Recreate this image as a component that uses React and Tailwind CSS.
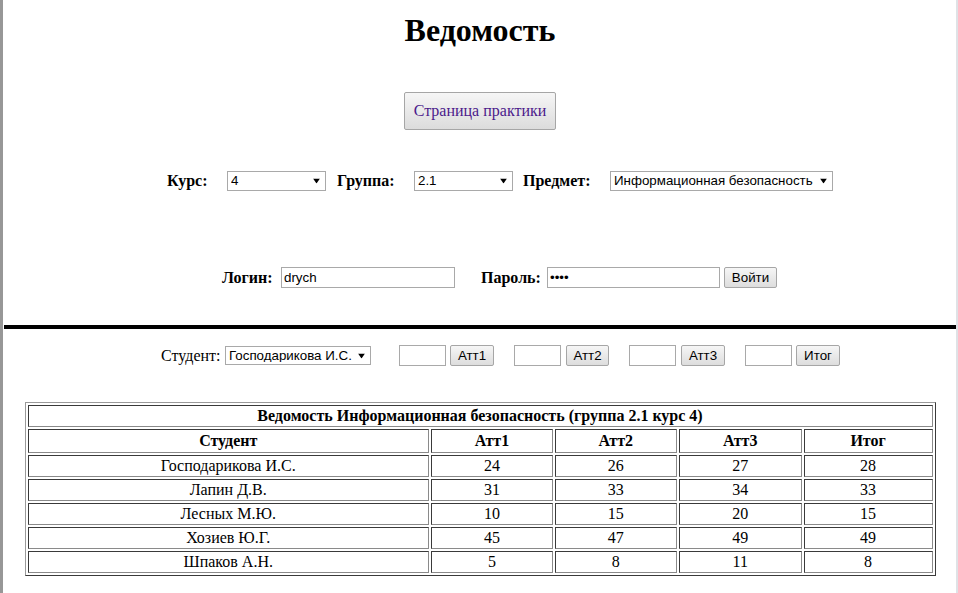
import React from "react";

const serif = "font-['Liberation_Serif',serif]";
const sans = "font-['Liberation_Sans',Arial,sans-serif]";

const rows = [
  ["Господарикова И.С.", 24, 26, 27, 28],
  ["Лапин Д.В.", 31, 33, 34, 33],
  ["Лесных М.Ю.", 10, 15, 20, 15],
  ["Хозиев Ю.Г.", 45, 47, 49, 49],
  ["Шпаков А.Н.", 5, 8, 11, 8],
];

function Btn({ children, className = "" }) {
  return (
    <button
      className={`block h-[21px] border border-[#a6a6a6] rounded-[2px] bg-linear-to-b from-[#f6f6f6] to-[#dddddd] text-[13.33px] font-normal text-black leading-none ${sans} ${className}`}
    >
      {children}
    </button>
  );
}

function Select({ value, className = "" }) {
  return (
    <div className={`relative shrink-0 bg-white ${className}`}>
      <select
        defaultValue={value}
        className={`block w-full h-full appearance-none border border-[#a9a9a9] bg-white pl-[3px] text-[13.33px] font-normal text-black leading-none outline-none ${sans}`}
      >
        <option>{value}</option>
      </select>
      {/* dropdown arrow */}
      <svg
        className="absolute right-[6px] top-1/2 -translate-y-1/2 pointer-events-none"
        width="7"
        height="5"
        viewBox="0 0 7 5"
      >
        <path d="M0 0h7L3.5 5z" fill="#000" />
      </svg>
    </div>
  );
}

function Input({ value, type = "text", className = "" }) {
  return (
    <input
      type={type}
      defaultValue={value}
      className={`block h-[21px] border border-[#a9a9a9] bg-white px-[2px] text-[13.33px] font-normal text-black outline-none ${sans} ${className}`}
    />
  );
}

const cell =
  "border border-t-[#3a3a3a] border-l-[#3a3a3a] border-r-[#8a8a8a] border-b-[#8a8a8a] px-[1px] py-0 text-center leading-[20px]";

export default function App() {
  return (
    <div className={`flex h-screen overflow-hidden bg-white text-black ${serif}`}>
      <div className="w-[3px] shrink-0 bg-[#979797]" />

      <div className="flex-1 pl-[1px]">
        {/* Heading */}
        <h1 className="mt-[12px] text-center text-[32px] leading-[37px] font-bold">
          Ведомость
        </h1>

        {/* Practice page button */}
        <div className="mt-[43px] flex justify-center">
          <button className="h-[38px] w-[152px] border border-[#a6a6a6] rounded-[2px] bg-linear-to-b from-[#f6f6f6] to-[#dcdcdc] text-[16px] text-[#4b1a8b]">
            Страница практики
          </button>
        </div>

        {/* Course / group / subject */}
        <div className="mt-[41px] ml-[163px] flex h-[20px] items-center text-[16px] leading-[18px] font-bold">
          <span className="w-[60px]">Курс:</span>
          <Select value="4" className="w-[99px] h-[20px]" />
          <span className="ml-[11px] w-[77px]">Группа:</span>
          <Select value="2.1" className="w-[99px] h-[20px]" />
          <span className="ml-[10px] w-[87px]">Предмет:</span>
          <Select value="Информационная безопасность" className="w-[223px] h-[20px]" />
        </div>

        {/* Login */}
        <div className="mt-[76px] ml-[218px] flex h-[21px] items-center text-[16px] leading-[18px] font-bold">
          <span className="w-[59px]">Логин:</span>
          <Input value="drych" className="w-[174px]" />
          <span className="ml-[26px] w-[66px]">Пароль:</span>
          <Input value="1234" type="password" className="w-[173px]" />
          <Btn className="ml-[4px] w-[53px]">Войти</Btn>
        </div>

        <div className="mt-[37px] h-[4px] bg-black" />

        {/* Student marks */}
        <div className="mt-[16px] ml-[157px] flex h-[21px] items-center text-[16px] leading-[18px]">
          <span className="w-[64px]">Студент:</span>
          <Select value="Господарикова И.С." className="w-[146px] h-[19px]" />
          <Input className="ml-[28px] w-[47px]" />
          <Btn className="ml-[4px] w-[44px]">Атт1</Btn>
          <Input className="ml-[20px] w-[47px]" />
          <Btn className="ml-[5px] w-[43px]">Атт2</Btn>
          <Input className="ml-[20px] w-[47px]" />
          <Btn className="ml-[5px] w-[44px]">Атт3</Btn>
          <Input className="ml-[20px] w-[47px]" />
          <Btn className="ml-[4px] w-[44px]">Итог</Btn>
        </div>

        {/* Table */}
        <table className="mt-[36px] mx-auto w-[911px] border-separate border-spacing-[2px] border border-t-[#9a9a9a] border-l-[#9a9a9a] border-r-[#3a3a3a] border-b-[#3a3a3a] text-[16px]">
          <thead>
            <tr>
              <th colSpan={5} className={`${cell} h-[22px] font-bold`}>
                Ведомость Информационная безопасность (группа 2.1 курс 4)
              </th>
            </tr>
            <tr>
              <th className={`${cell} h-[24px] w-[402px] font-bold`}>Студент</th>
              <th className={`${cell} h-[24px] w-[122px] font-bold`}>Атт1</th>
              <th className={`${cell} h-[24px] w-[122px] font-bold`}>Атт2</th>
              <th className={`${cell} h-[24px] w-[123px] font-bold`}>Атт3</th>
              <th className={`${cell} h-[24px] w-[129px] font-bold`}>Итог</th>
            </tr>
          </thead>
          <tbody>
            {rows.map((r) => (
              <tr key={r[0]}>
                {r.map((v, i) => (
                  <td key={i} className={`${cell} h-[22px]`}>
                    {v}
                  </td>
                ))}
              </tr>
            ))}
          </tbody>
        </table>
      </div>

      <div className="w-[2px] shrink-0 bg-[#dfe2e6]" />
    </div>
  );
}
